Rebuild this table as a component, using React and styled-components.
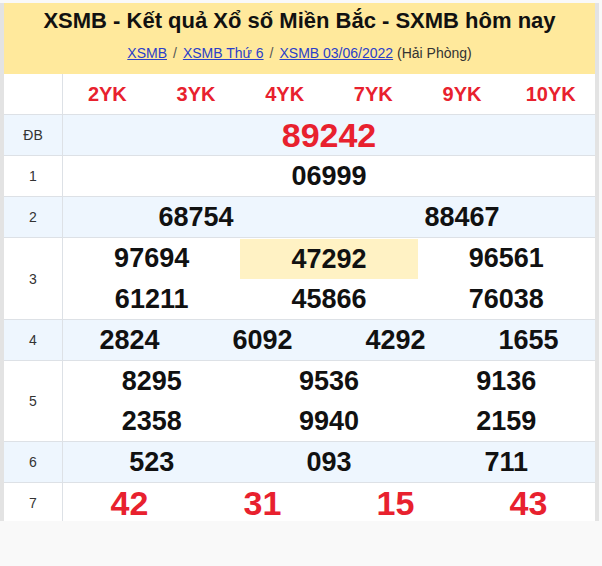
import React from "react";
import styled, { createGlobalStyle } from "styled-components";

const GlobalStyle = createGlobalStyle`
  html, body { margin: 0; padding: 0; }
  body {
    background: #f9f9f9;
    font-family: "Liberation Sans", Arial, sans-serif;
  }
`;

const Frame = styled.div`
  width: 591px;
  height: 518px;
  margin-top: 3px;
  border-left: 4px solid #e3e3e3;
  border-right: 4px solid #e3e3e3;
  background: #fff;
  overflow: hidden;
`;

const Banner = styled.header`
  background: #ffe99c;
  padding: 5px 0 11px;
  text-align: center;
`;

const Title = styled.h1`
  margin: 0;
  font-size: 22px;
  line-height: 26px;
  font-weight: 700;
  color: #111;
`;

const Crumbs = styled.div`
  margin-top: 9px;
  font-size: 14px;
  line-height: 20px;
  color: #333;
`;

const Crumb = styled.a`
  color: #2b3fc8;
  text-decoration: underline;
`;

const Sep = styled.span`
  color: #555;
  margin: 0 6px;
`;

const Row = styled.div`
  display: flex;
  border-bottom: 1px solid #dde1e6;
  background: ${(p) => (p.$shade ? "#eef6fe" : "#fff")};
`;

const Label = styled.div`
  width: 58px;
  flex: none;
  border-right: 1px solid #dde1e6;
  display: flex;
  align-items: center;
  justify-content: center;
  font-size: 14px;
  color: #333;
`;

const Values = styled.div`
  flex: 1;
  display: grid;
  grid-template-columns: repeat(${(p) => p.$cols}, 1fr);
`;

const Cell = styled.div`
  height: 40px;
  display: flex;
  align-items: center;
  justify-content: center;
  font-weight: 700;
  font-size: ${(p) => p.$size || 27}px;
  color: ${(p) => (p.$red ? "#e8212e" : "#111")};
  background: ${(p) => (p.$hl ? "#fff2c4" : "transparent")};
  margin: ${(p) => (p.$hl ? "1px 0 0" : "0")};
`;

const Code = styled.div`
  height: 40px;
  display: flex;
  align-items: center;
  justify-content: center;
  font-weight: 700;
  font-size: 20px;
  color: #e8212e;
`;

const rows = [
  { label: "ĐB", cols: 1, nums: ["89242"], red: true, size: 34, shade: true },
  { label: "1", cols: 1, nums: ["06999"] },
  { label: "2", cols: 2, nums: ["68754", "88467"], shade: true },
  { label: "3", cols: 3, nums: ["97694", "47292", "96561", "61211", "45866", "76038"], hl: 1 },
  { label: "4", cols: 4, nums: ["2824", "6092", "4292", "1655"], shade: true },
  { label: "5", cols: 3, nums: ["8295", "9536", "9136", "2358", "9940", "2159"] },
  { label: "6", cols: 3, nums: ["523", "093", "711"], shade: true },
  { label: "7", cols: 4, nums: ["42", "31", "15", "43"], red: true, size: 34 },
];

const codes = ["2YK", "3YK", "4YK", "7YK", "9YK", "10YK"];

export default function App() {
  return (
    <>
      <GlobalStyle />
      <Frame>
        <Banner>
          <Title>XSMB - Kết quả Xổ số Miền Bắc - SXMB hôm nay</Title>
          <Crumbs>
            <Crumb href="#">XSMB</Crumb>
            <Sep>/</Sep>
            <Crumb href="#">XSMB Thứ 6</Crumb>
            <Sep>/</Sep>
            <Crumb href="#">XSMB 03/06/2022</Crumb> (Hải Phòng)
          </Crumbs>
        </Banner>
        <Row>
          <Label />
          <Values $cols={6}>
            {codes.map((c) => (
              <Code key={c}>{c}</Code>
            ))}
          </Values>
        </Row>
        {rows.map((r) => (
          <Row key={r.label} $shade={r.shade}>
            <Label>{r.label}</Label>
            <Values $cols={r.cols}>
              {r.nums.map((n, i) => (
                <Cell key={i} $red={r.red} $size={r.size} $hl={r.hl === i}>
                  {n}
                </Cell>
              ))}
            </Values>
          </Row>
        ))}
      </Frame>
    </>
  );
}
